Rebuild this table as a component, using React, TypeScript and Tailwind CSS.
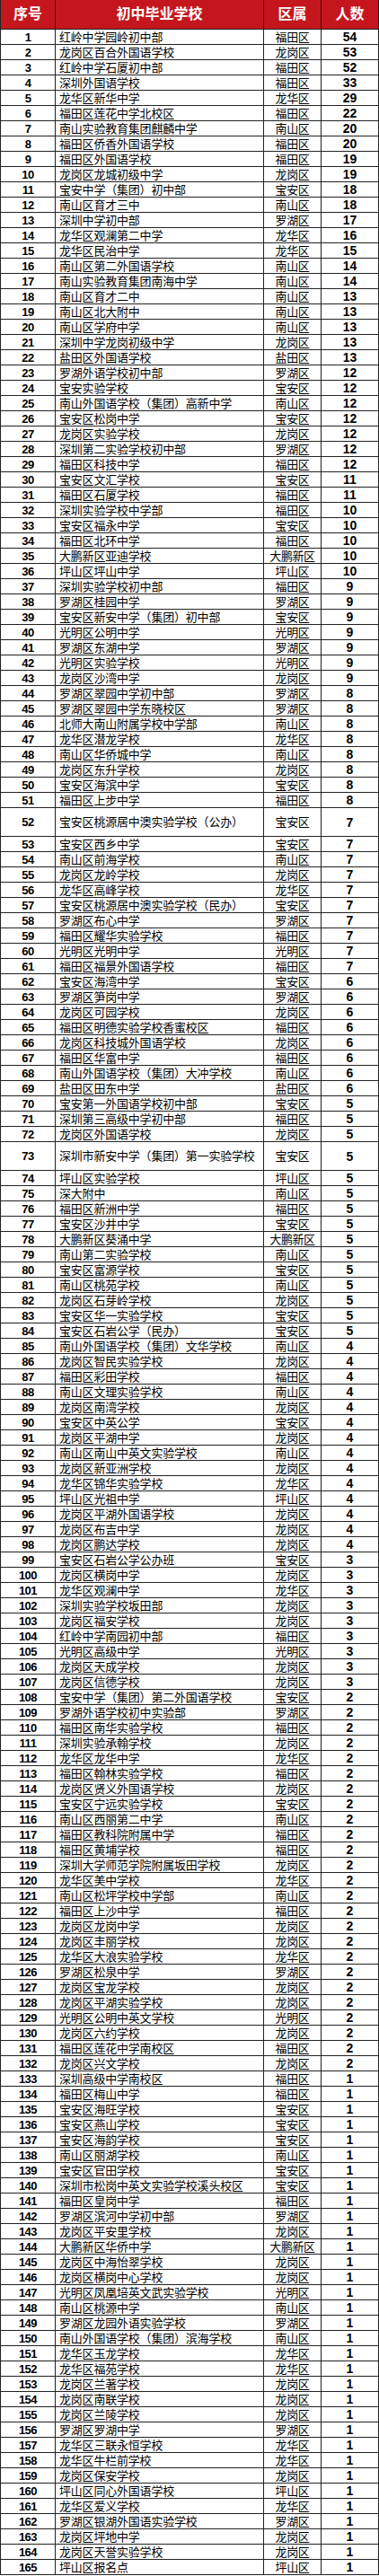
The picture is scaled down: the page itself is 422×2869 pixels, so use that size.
import React from "react";

type Row = [string, string, number];

const rows: Row[] = [
  ["红岭中学园岭初中部", "福田区", 54],
  ["龙岗区百合外国语学校", "龙岗区", 53],
  ["红岭中学石厦初中部", "福田区", 52],
  ["深圳外国语学校", "福田区", 33],
  ["龙华区新华中学", "龙华区", 29],
  ["福田区莲花中学北校区", "福田区", 22],
  ["南山实验教育集团麒麟中学", "南山区", 20],
  ["福田区侨香外国语学校", "福田区", 20],
  ["福田区外国语学校", "福田区", 19],
  ["龙岗区龙城初级中学", "龙岗区", 19],
  ["宝安中学（集团）初中部", "宝安区", 18],
  ["南山区育才三中", "南山区", 18],
  ["深圳中学初中部", "罗湖区", 17],
  ["龙华区观澜第二中学", "龙华区", 16],
  ["龙华区民治中学", "龙华区", 15],
  ["南山区第二外国语学校", "南山区", 14],
  ["南山实验教育集团南海中学", "南山区", 14],
  ["南山区育才二中", "南山区", 13],
  ["南山区北大附中", "南山区", 13],
  ["南山区学府中学", "南山区", 13],
  ["深圳中学龙岗初级中学", "龙岗区", 13],
  ["盐田区外国语学校", "盐田区", 13],
  ["罗湖外语学校初中部", "罗湖区", 12],
  ["宝安实验学校", "宝安区", 12],
  ["南山外国语学校（集团）高新中学", "南山区", 12],
  ["宝安区松岗中学", "宝安区", 12],
  ["龙岗区实验学校", "龙岗区", 12],
  ["深圳第二实验学校初中部", "罗湖区", 12],
  ["福田区科技中学", "福田区", 12],
  ["宝安区文汇学校", "宝安区", 11],
  ["福田区石厦学校", "福田区", 11],
  ["深圳实验学校中学部", "福田区", 10],
  ["宝安区福永中学", "宝安区", 10],
  ["福田区北环中学", "福田区", 10],
  ["大鹏新区亚迪学校", "大鹏新区", 10],
  ["坪山区坪山中学", "坪山区", 10],
  ["深圳实验学校初中部", "福田区", 9],
  ["罗湖区桂园中学", "罗湖区", 9],
  ["宝安区新安中学（集团）初中部", "宝安区", 9],
  ["光明区公明中学", "光明区", 9],
  ["罗湖区东湖中学", "罗湖区", 9],
  ["光明区实验学校", "光明区", 9],
  ["龙岗区沙湾中学", "龙岗区", 9],
  ["罗湖区翠园中学初中部", "罗湖区", 8],
  ["罗湖区翠园中学东晓校区", "罗湖区", 8],
  ["北师大南山附属学校中学部", "南山区", 8],
  ["龙华区潜龙学校", "龙华区", 8],
  ["南山区华侨城中学", "南山区", 8],
  ["龙岗区东升学校", "龙岗区", 8],
  ["宝安区海滨中学", "宝安区", 8],
  ["福田区上步中学", "福田区", 8],
  ["宝安区桃源居中澳实验学校（公办）", "宝安区", 7],
  ["宝安区西乡中学", "宝安区", 7],
  ["南山区前海学校", "南山区", 7],
  ["龙岗区龙岭学校", "龙岗区", 7],
  ["龙华区高峰学校", "龙华区", 7],
  ["宝安区桃源居中澳实验学校（民办）", "宝安区", 7],
  ["罗湖区布心中学", "罗湖区", 7],
  ["福田区耀华实验学校", "福田区", 7],
  ["光明区光明中学", "光明区", 7],
  ["福田区福景外国语学校", "福田区", 7],
  ["宝安区海湾中学", "宝安区", 6],
  ["罗湖区笋岗中学", "罗湖区", 6],
  ["龙岗区可园学校", "龙岗区", 6],
  ["福田区明德实验学校香蜜校区", "福田区", 6],
  ["龙岗区科技城外国语学校", "龙岗区", 6],
  ["福田区华富中学", "福田区", 6],
  ["南山外国语学校（集团）大冲学校", "南山区", 6],
  ["盐田区田东中学", "盐田区", 6],
  ["宝安第一外国语学校初中部", "宝安区", 5],
  ["深圳第三高级中学初中部", "福田区", 5],
  ["龙岗区外国语学校", "龙岗区", 5],
  ["深圳市新安中学（集团）第一实验学校", "宝安区", 5],
  ["坪山区实验学校", "坪山区", 5],
  ["深大附中", "南山区", 5],
  ["福田区新洲中学", "福田区", 5],
  ["宝安区沙井中学", "宝安区", 5],
  ["大鹏新区葵涌中学", "大鹏新区", 5],
  ["南山第二实验学校", "南山区", 5],
  ["宝安区富源学校", "宝安区", 5],
  ["南山区桃苑学校", "南山区", 5],
  ["龙岗区石芽岭学校", "龙岗区", 5],
  ["宝安区华一实验学校", "宝安区", 5],
  ["宝安区石岩公学（民办）", "宝安区", 5],
  ["南山外国语学校（集团）文华学校", "南山区", 4],
  ["龙岗区智民实验学校", "龙岗区", 4],
  ["福田区彩田学校", "福田区", 4],
  ["南山区文理实验学校", "南山区", 4],
  ["龙岗区南湾学校", "龙岗区", 4],
  ["宝安区中英公学", "宝安区", 4],
  ["龙岗区平湖中学", "龙岗区", 4],
  ["南山区南山中英文实验学校", "南山区", 4],
  ["龙岗区新亚洲学校", "龙岗区", 4],
  ["龙华区锦华实验学校", "龙华区", 4],
  ["坪山区光祖中学", "坪山区", 4],
  ["龙岗区平湖外国语学校", "龙岗区", 4],
  ["龙岗区布吉中学", "龙岗区", 4],
  ["龙岗区鹏达学校", "龙岗区", 4],
  ["宝安区石岩公学公办班", "宝安区", 3],
  ["龙岗区横岗中学", "龙岗区", 3],
  ["龙华区观澜中学", "龙华区", 3],
  ["深圳实验学校坂田部", "龙岗区", 3],
  ["龙岗区福安学校", "龙岗区", 3],
  ["红岭中学南园初中部", "福田区", 3],
  ["光明区高级中学", "光明区", 3],
  ["龙岗区天成学校", "龙岗区", 3],
  ["龙岗区信德学校", "龙岗区", 3],
  ["宝安中学（集团）第二外国语学校", "宝安区", 2],
  ["罗湖外语学校初中实验部", "罗湖区", 2],
  ["福田区南华实验学校", "福田区", 2],
  ["深圳实验承翰学校", "龙岗区", 2],
  ["龙华区龙华中学", "龙华区", 2],
  ["福田区翰林实验学校", "福田区", 2],
  ["龙岗区贤义外国语学校", "龙岗区", 2],
  ["宝安区宁远实验学校", "宝安区", 2],
  ["南山区西丽第二中学", "南山区", 2],
  ["福田区教科院附属中学", "福田区", 2],
  ["福田区黄埔学校", "福田区", 2],
  ["深圳大学师范学院附属坂田学校", "龙岗区", 2],
  ["龙华区美中学校", "龙华区", 2],
  ["南山区松坪学校中学部", "南山区", 2],
  ["福田区上沙中学", "福田区", 2],
  ["龙岗区龙岗中学", "龙岗区", 2],
  ["龙岗区丰丽学校", "龙岗区", 2],
  ["龙华区大浪实验学校", "龙华区", 2],
  ["罗湖区松泉中学", "罗湖区", 2],
  ["龙岗区宝龙学校", "龙岗区", 2],
  ["龙岗区平湖实验学校", "龙岗区", 2],
  ["光明区公明中英文学校", "光明区", 2],
  ["龙岗区六约学校", "龙岗区", 2],
  ["福田区莲花中学南校区", "福田区", 2],
  ["龙岗区兴文学校", "龙岗区", 2],
  ["深圳高级中学南校区", "福田区", 1],
  ["福田区梅山中学", "福田区", 1],
  ["宝安区海旺学校", "宝安区", 1],
  ["宝安区燕山学校", "宝安区", 1],
  ["宝安区海韵学校", "宝安区", 1],
  ["南山区丽湖学校", "南山区", 1],
  ["宝安区官田学校", "宝安区", 1],
  ["深圳市松岗中英文实验学校溪头校区", "宝安区", 1],
  ["福田区皇岗中学", "福田区", 1],
  ["罗湖区滨河中学初中部", "罗湖区", 1],
  ["龙岗区平安里学校", "龙岗区", 1],
  ["大鹏新区华侨中学", "大鹏新区", 1],
  ["龙岗区中海怡翠学校", "龙岗区", 1],
  ["龙岗区横岗中心学校", "龙岗区", 1],
  ["光明区凤凰培英文武实验学校", "光明区", 1],
  ["南山区桃源中学", "南山区", 1],
  ["罗湖区龙园外语实验学校", "罗湖区", 1],
  ["南山外国语学校（集团）滨海学校", "南山区", 1],
  ["龙华区玉龙学校", "龙华区", 1],
  ["龙华区福苑学校", "龙华区", 1],
  ["龙岗区兰著学校", "龙岗区", 1],
  ["龙岗区南联学校", "龙岗区", 1],
  ["龙岗区兰陵学校", "龙岗区", 1],
  ["罗湖区罗湖中学", "罗湖区", 1],
  ["龙华区三联永恒学校", "龙华区", 1],
  ["龙华区牛栏前学校", "龙华区", 1],
  ["龙岗区保安学校", "龙岗区", 1],
  ["坪山区同心外国语学校", "坪山区", 1],
  ["龙华区爱义学校", "龙华区", 1],
  ["罗湖区银湖外国语实验学校", "罗湖区", 1],
  ["龙岗区坪地中学", "龙岗区", 1],
  ["龙岗区天誉实验学校", "龙岗区", 1],
  ["坪山区报名点", "坪山区", 1],
];

const tallRows = new Set([52, 73]);

export default function App() {
  return (
    <div className="w-[422px] bg-white font-['Liberation_Sans','Noto_Sans_CJK_SC',sans-serif]">
      <div className="border-l border-[#222]">
        <div className="grid h-[33px] grid-cols-[61px_232px_64px_64px] border-b border-[#222] bg-[#c5161d] text-[16px] font-bold leading-none text-white">
          <div className="flex items-center justify-center border-r border-[#4a0a0a]">序号</div>
          <div className="flex items-center justify-center border-r border-[#4a0a0a]">初中毕业学校</div>
          <div className="flex items-center justify-center border-r border-[#4a0a0a]">区属</div>
          <div className="flex items-center justify-center border-r border-[#4a0a0a]">人数</div>
        </div>
        {rows.map(([name, district, count], i) => {
          const n = i + 1;
          const tall = tallRows.has(n);
          return (
            <div
              key={n}
              className={`grid grid-cols-[61px_232px_64px_64px] border-b border-[#222] leading-none text-black ${tall ? "h-[32px]" : "h-[17px]"}`}
            >
              <div className="flex items-center justify-center border-r border-[#222] text-[13px] font-bold tracking-[-0.5px]">
                {n}
              </div>
              <div className="flex items-center whitespace-nowrap border-r border-[#222] pl-[4px] text-[13px] tracking-[-0.2px]">
                {name}
              </div>
              <div className="flex items-center justify-center whitespace-nowrap border-r border-[#222] text-[13px] tracking-[-0.4px]">
                {district}
              </div>
              <div className="flex items-center justify-center border-r border-[#222] text-[14px] font-bold">
                {count}
              </div>
            </div>
          );
        })}
      </div>
    </div>
  );
}
